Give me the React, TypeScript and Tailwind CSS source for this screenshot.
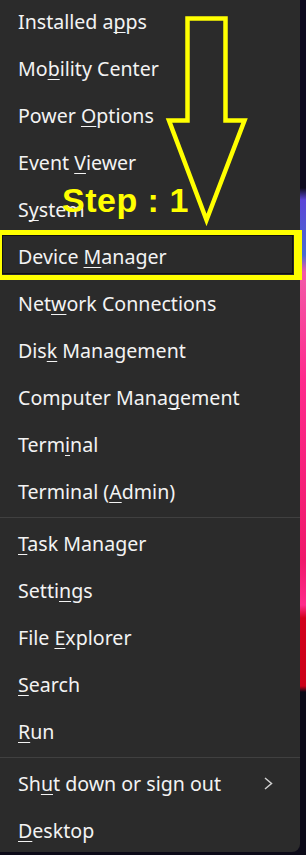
import { ReactNode } from "react";

type Item = { pre: string; key: string; post: string; sub?: boolean };

const groups: Item[][] = [
  [
    { pre: "Installed a", key: "p", post: "ps" },
    { pre: "Mo", key: "b", post: "ility Center" },
    { pre: "Power ", key: "O", post: "ptions" },
    { pre: "Event ", key: "V", post: "iewer" },
    { pre: "S", key: "y", post: "stem" },
    { pre: "Device ", key: "M", post: "anager" },
    { pre: "Net", key: "w", post: "ork Connections" },
    { pre: "Dis", key: "k", post: " Management" },
    { pre: "Computer Mana", key: "g", post: "ement" },
    { pre: "Term", key: "i", post: "nal" },
    { pre: "Terminal (", key: "A", post: "dmin)" },
  ],
  [
    { pre: "", key: "T", post: "ask Manager" },
    { pre: "Setti", key: "n", post: "gs" },
    { pre: "File ", key: "E", post: "xplorer" },
    { pre: "", key: "S", post: "earch" },
    { pre: "", key: "R", post: "un" },
  ],
  [
    { pre: "Sh", key: "u", post: "t down or sign out", sub: true },
    { pre: "", key: "D", post: "esktop" },
  ],
];

function Row({ item }: { item: Item }): ReactNode {
  return (
    <div className="flex h-[47px] shrink-0 items-center justify-between pl-[18px] pr-[27px]">
      <span className="whitespace-nowrap">
        {item.pre}
        <span className="underline decoration-1 underline-offset-[3px] [text-decoration-skip-ink:none]">
          {item.key}
        </span>
        {item.post}
      </span>
      {item.sub && (
        <svg width="9" height="13" viewBox="0 0 9 13" fill="none">
          <polyline points="1,1 7.5,6.5 1,12" stroke="#d0d0d0" strokeWidth="1.5" />
        </svg>
      )}
    </div>
  );
}

export default function App() {
  return (
    <div className="relative flex h-[855px] w-[306px] overflow-hidden bg-[#0c0a18]">
      {/* context menu */}
      <div className="h-[852px] w-[300px] shrink-0 overflow-hidden rounded-br-lg bg-[#2b2b2b] font-['Noto_Sans',sans-serif] text-[19.6px] text-[#f3f3f3]">
        <div className="-mt-[2px] flex flex-col">
          {groups.map((group, gi) => (
            <div key={gi} className="flex flex-col">
              {gi > 0 && <div className="my-[2px] h-px bg-[#404040]" />}
              {group.map((item, i) => (
                <Row key={i} item={item} />
              ))}
            </div>
          ))}
        </div>
      </div>

      {/* desktop wallpaper peeking out */}
      <div className="flex-1 bg-[linear-gradient(180deg,#0e0b1f_0px,#0e0b1f_188px,#5b45d8_200px,#4a6bd0_255px,#f25aa8_272px,#ff2a8c_380px,#f0186a_560px,#ff2a8a_605px,#d2001c_618px,#cc0018_686px,#0c0a18_692px,#0c0a18_855px)]" />

      {/* annotation: highlight box */}
      <div className="pointer-events-none absolute left-[2px] top-[235px] h-[39px] w-[291px] border border-[#111]" />
      <div className="pointer-events-none absolute left-[-3px] top-[230px] h-[50px] w-[305px] border-y-[5px] border-l-[5px] border-r-[8px] border-[#ffff00]" />

      {/* annotation: arrow */}
      <svg className="pointer-events-none absolute left-0 top-0" width="306" height="240" viewBox="0 0 306 240" fill="none">
        <polygon
          points="187.5,18.5 225.5,18.5 225.5,120.5 244.5,120.5 206.5,220 169,120.5 187.5,120.5"
          stroke="#ffff00"
          strokeWidth="4.5"
        />
      </svg>

      {/* annotation: step label */}
      <div className="pointer-events-none absolute left-[62px] top-[183px] font-['Liberation_Sans',Arial,sans-serif] text-[34px] font-bold leading-none tracking-[0.5px] text-[#ffff00]">
        Step : 1
      </div>
    </div>
  );
}
